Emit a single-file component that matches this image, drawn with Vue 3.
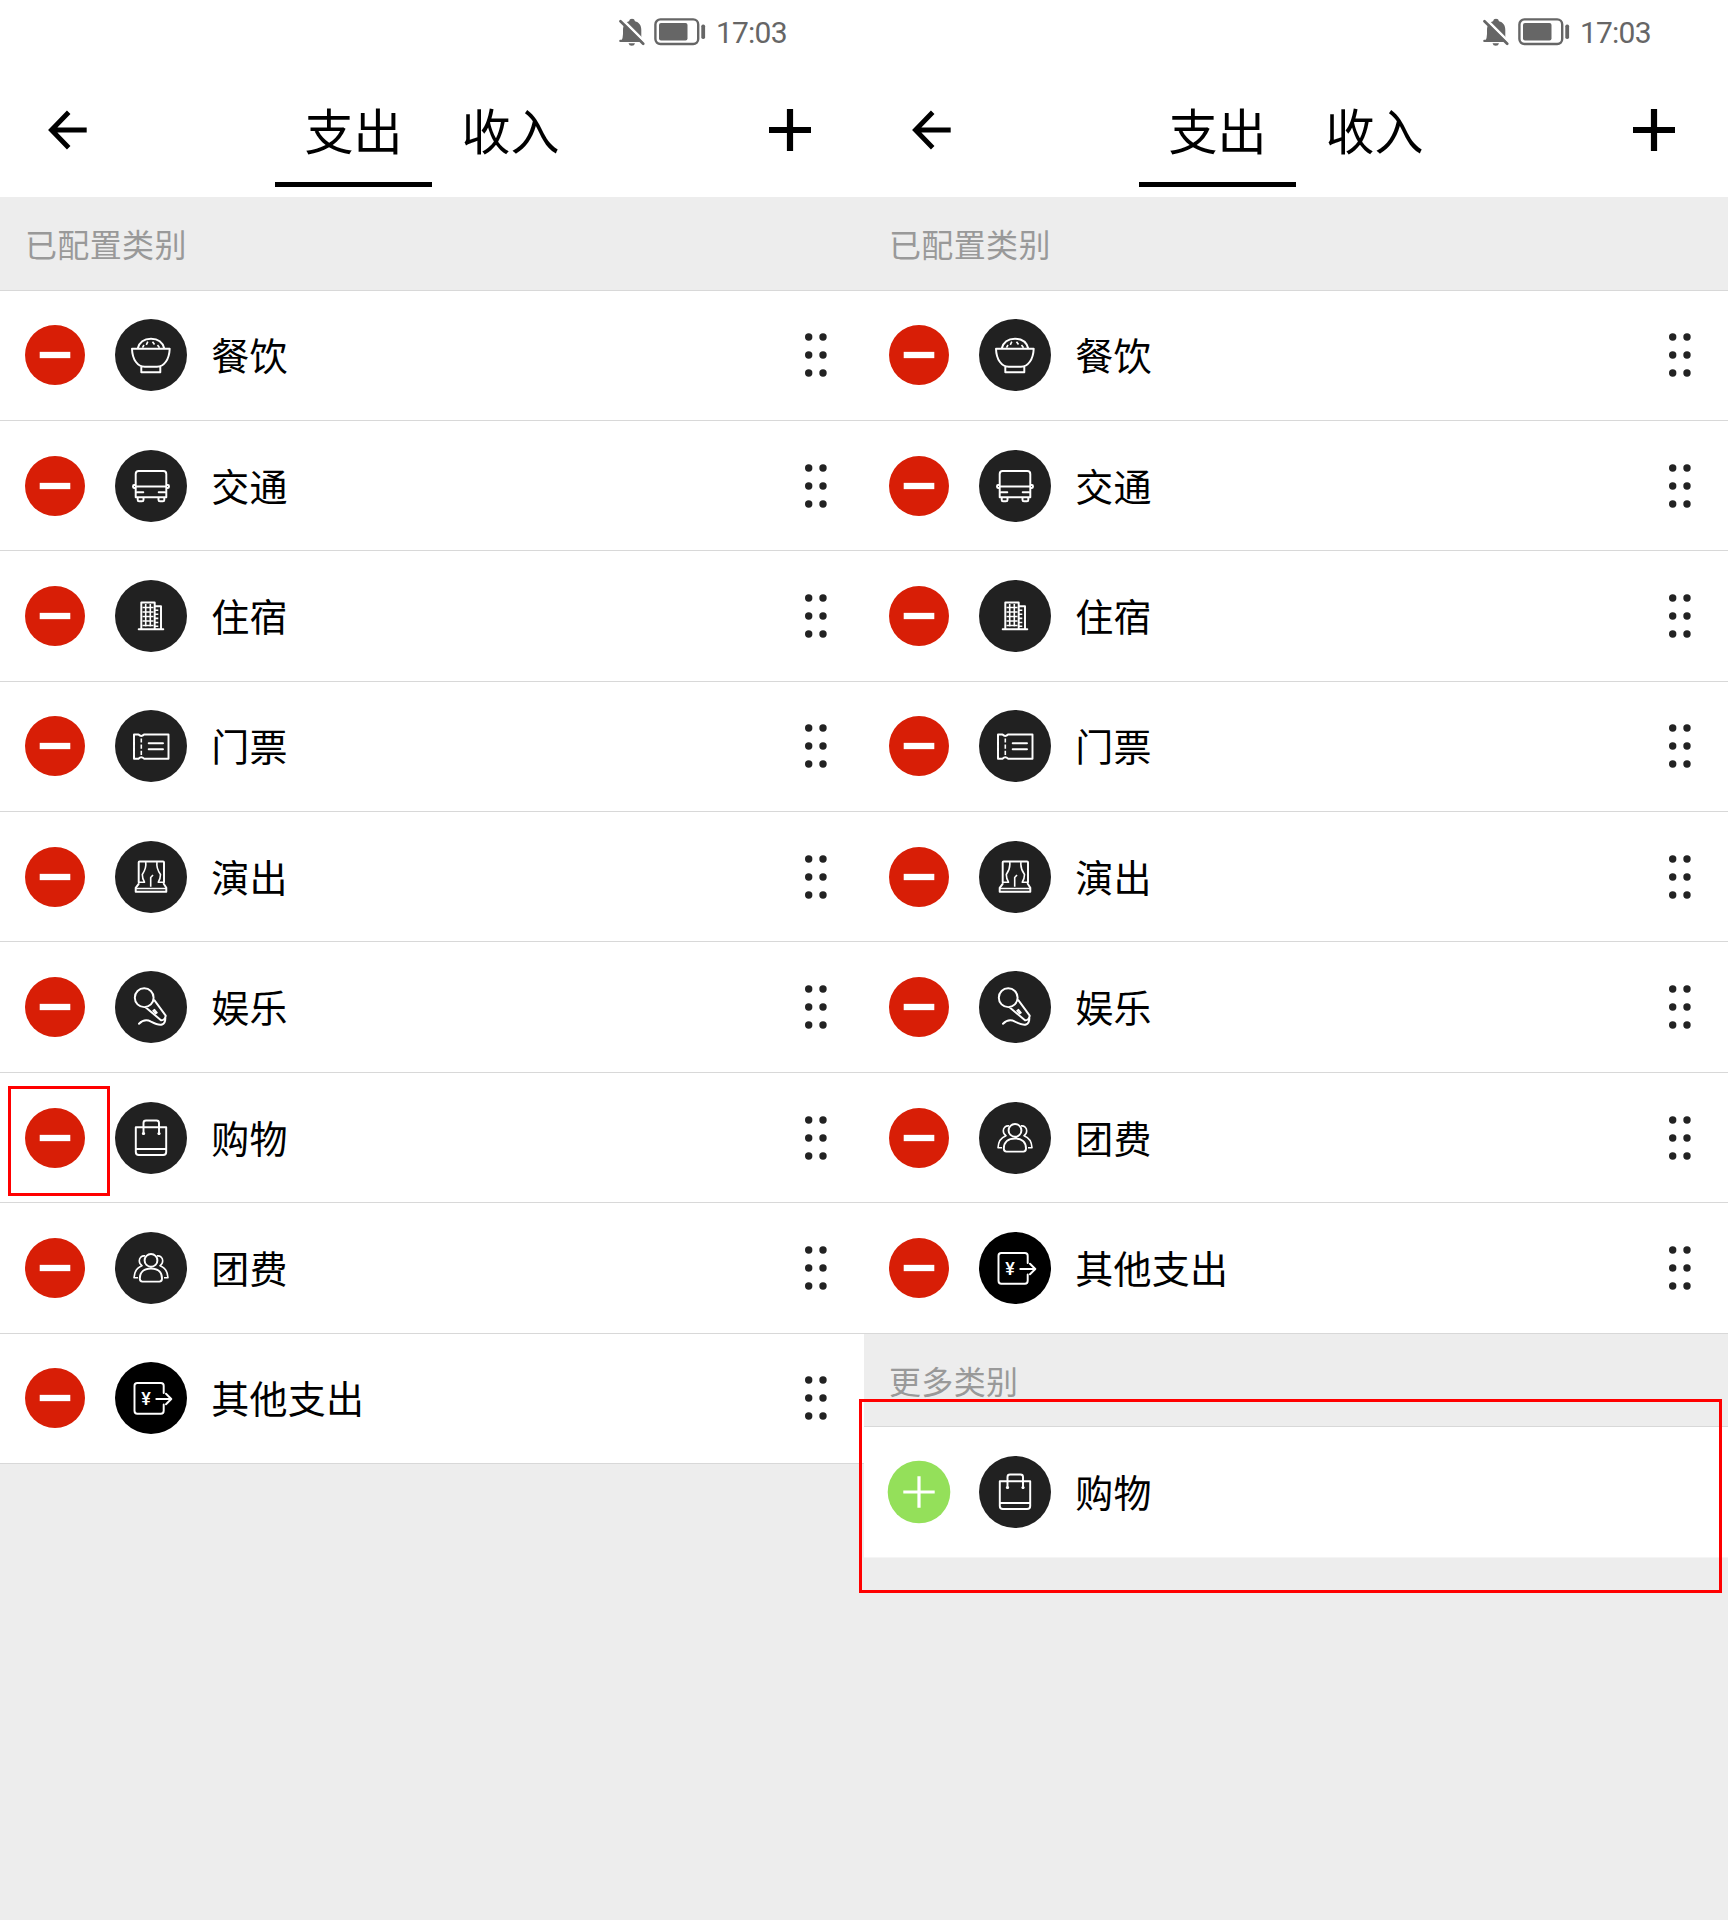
<script setup>
const categories = {
  food: {
    name: '餐饮',
    line: 'M22.7 29.5C24.5 22.5 30 19.7 36 19.7S47.5 22.5 49.3 29.5M17 29.7H54.7C54.3 40.5 49 47.7 42 47.7H29.7C22.5 47.7 17.3 40.5 17 29.7ZM26.3 48V53.2H45.3V48',
    fine: 'M32.8 22.7L31.3 25.8M37.5 22.7L39.5 25.5M29 26L27.5 28.7M42.5 26L44.5 28.7',
  },
  transit: {
    name: '交通',
    line: 'M20.7 47.3V24Q20.7 21 23.7 21H48.3Q51.3 21 51.3 24V47.3ZM20.7 36.5H51.3M20.7 35H19Q18 35 18 36.5T19 38H20.7M51.3 35H53Q54 35 54 36.5T53 38H51.3M22.3 42.3H28.3M43.7 42.3H49.7M22.7 47.3V50Q22.7 51.2 24 51.2H27Q28.5 51.2 28.5 50V47.3M43.5 47.3V50Q43.5 51.2 45 51.2H48Q49.3 51.2 49.3 50V47.3',
  },
  hotel: {
    name: '住宿',
    line: 'M26.3 49V22.5H39.7V49M39.7 26.2H46V49M23.7 49.2H48.3',
    fine: 'M30.7 24V46.5M35.3 24V46.5M27.5 27.5H38.5M27.5 32H38.5M27.5 36.5H38.5M27.5 41H38.5M27.5 45.5H38.5M40 30.2H43.3M40 34.3H43.3M40 38.4H43.3M40 42.5H43.3M40 46.2H43.3',
  },
  ticket: {
    name: '门票',
    line: 'M19 24.5H23.5Q26.3 27.3 29 24.5H53.5V48.7H29Q26.3 45.8 23.5 48.7H19ZM33.7 33.3H48M33.7 39.3H48',
    fine: 'M26.3 28.5V32.5M26.3 34.5V38.8M26.3 40.8V45',
  },
  show: {
    name: '演出',
    line: 'M23.7 41.3V21.3Q23.7 20.5 24.5 20.5H48Q49 20.5 49 21.3V41.3M23.7 42.8L20.7 46.8V50.8H51.3V46.8L48.7 42.8',
    fine: 'M30.7 21C31.5 26 30 29.500 27.3 33.5C27.3 37 28.5 39.5 29.5 41.2H23.7M42 21C41.2 26 42.7 29.500 45.500 33.5C45.5 37 44.3 39.5 43.3 41.2H49M21 47.5H51.3M35.7 45.7V36.500L38 34',
  },
  fun: {
    name: '娱乐',
    line: 'M38.6 26.7A9.4 9.4 0 1 1 19.8 26.7A9.4 9.4 0 1 1 38.6 26.7ZM30.8 36.6L46 49.2C48.5 49.5 50.5 47.5 50.7 44.6L39.5 29.3M24 52.8C28 48.8 32.5 48.8 36 50.7C40.5 53 44 54.6 47 53.5C49.7 52.5 50.5 49.5 50.3 46.5',
    fine: 'M39.5 38.7L42 41.7L40.7 42.6L38 39.8Z',
  },
  shopping: {
    name: '购物',
    line: 'M20.8 25.2H51.2V50Q51.2 53 48.2 53H23.8Q20.8 53 20.8 50ZM20.8 47H51.2M28.5 32V21Q28.5 18.5 31 18.5H41.5Q44 18.5 44 21V32',
    dots: [[28.5, 31.5], [44, 31.5]],
  },
  group: {
    name: '团费',
    line: 'M42.4 28.4A6.4 6.4 0 1 1 29.6 28.4A6.4 6.4 0 1 1 42.4 28.4ZM27.5 49.6Q24.8 49.6 24.8 46.5C24.8 39.7 29.5 36.4 36 36.4S47 39.7 47 46.5Q47 49.6 44.3 49.6Z',
    fine: 'M30 23.9C26.5 23.5 24.3 25.7 24.3 28.8C24.3 31 25.3 32.7 27 33.7C22 35.5 19.3 39.3 19 45.8H23M42 23.9C45.5 23.5 47.7 25.7 47.7 28.8C47.7 31 46.7 32.7 45 33.7C50 35.5 52.7 39.3 53 45.8H49',
  },
  other: {
    name: '其他支出',
    black: true,
    currency: true,
    line: 'M48.7 31V23.7Q48.7 20.9 45.9 20.9H22.3Q19.5 20.9 19.5 23.7V48.7Q19.5 51.7 22.3 51.7H45.9Q48.7 51.7 48.7 48.7V42.5M41.3 37H56M51 31.7L56.3 37L51 42.3',
  },
}

const pick = (...keys) => keys.map((key) => categories[key])

const screens = [
  {
    configured: pick('food', 'transit', 'hotel', 'ticket', 'show', 'fun', 'shopping', 'group', 'other'),
    more: [],
    mark: 'mark-remove',
  },
  {
    configured: pick('food', 'transit', 'hotel', 'ticket', 'show', 'fun', 'group', 'other'),
    more: pick('shopping'),
    mark: 'mark-added',
  },
]

const groupsOf = (screen) =>
  [
    { title: '已配置类别', items: screen.configured, addable: false },
    { title: '更多类别', items: screen.more, addable: true },
  ].filter((group) => group.items.length)
</script>

<template>
  <main class="board">
    <section v-for="(screen, i) in screens" :key="i" class="screen">
      <div class="status">
        <svg class="bell" viewBox="0 0 27 29">
          <path d="M3.2 23.5Q5 20 5 16V12C5 7 7.5 4.2 11 3.2Q11.5 .8 14 .8T17 3.2C21 4.2 23.3 7 23.3 12V18.5L25 23.5ZM10.5 25.2H17Q16.5 27.8 13.8 27.8T10.5 25.2Z" fill="#666" />
          <path d="M4 1.2L28.5 25.700" stroke="#fff" stroke-width="2.800" />
          <path d="M2.500 3.2L25.200 25.800" stroke="#666" stroke-width="2.700" stroke-linecap="round" />
          <path d="M2.300 22.900H21.500" stroke="#666" stroke-width="2.200" stroke-linecap="round" />
        </svg>
        <svg class="battery" viewBox="0 0 52 28">
          <rect x="1.400" y="1.400" width="42.800" height="24.600" rx="5" fill="none" stroke="#666" stroke-width="2.400" />
          <rect x="5" y="5" width="28.500" height="17.500" rx="2" fill="#666" />
          <rect x="47.300" y="6.500" width="3.800" height="14.400" rx="1.700" fill="#666" />
        </svg>
        <span class="time">17:03</span>
      </div>

      <header class="bar">
        <svg class="back" viewBox="0 0 40 40">
          <path d="M39.700 20H5M21.700 2.300L4.500 20L21.700 37.700" fill="none" stroke="#000" stroke-width="4.900" />
        </svg>
        <nav class="tabs">
          <span class="tab active">支出</span>
          <span class="tab">收入</span>
        </nav>
        <svg class="plus" viewBox="0 0 42 42">
          <path d="M21 0V42M0 21H42" stroke="#000" stroke-width="6.200" />
        </svg>
      </header>

      <template v-for="group in groupsOf(screen)" :key="group.title">
        <h2 class="heading">{{ group.title }}</h2>
        <ul class="list" :class="{ addable: group.addable }">
          <li v-for="item in group.items" :key="item.name" class="row">
            <svg class="action" viewBox="-32 -32 64 64">
              <template v-if="group.addable">
                <circle r="31.300" fill="#94e05a" />
                <path d="M-15.700 0H15.700M0 -15.700V15.700" stroke="#fff" stroke-width="3.200" />
              </template>
              <template v-else>
                <circle r="30" fill="#d81e06" />
                <path d="M-15.300 0H15.300" stroke="#fff" stroke-width="6.300" />
              </template>
            </svg>
            <svg class="icon" viewBox="0 0 72 72" fill="none" stroke="#fff" stroke-linejoin="round">
              <circle cx="36" cy="36" r="36" :fill="item.black ? '#000' : '#212121'" stroke="none" />
              <path :d="item.line" stroke-width="1.950" stroke-linecap="round" />
              <path v-if="item.fine" :d="item.fine" stroke-width="1.600" />
              <circle v-for="(dot, d) in item.dots" :key="d" :cx="dot[0]" :cy="dot[1]" r="1.600" fill="#fff" stroke="none" />
              <text v-if="item.currency" class="yen" x="31" y="43" text-anchor="middle">¥</text>
            </svg>
            <span class="name">{{ item.name }}</span>
            <svg v-if="!group.addable" class="grip" viewBox="0 0 24 46" fill="#222">
              <template v-for="y in [5, 23, 41]" :key="y">
                <circle cx="4.700" :cy="y" r="3.700" />
                <circle cx="19" :cy="y" r="3.700" />
              </template>
            </svg>
          </li>
        </ul>
      </template>

      <div class="mark" :class="screen.mark"></div>
    </section>
  </main>
</template>

<style>
body {
  margin: 0;
  background: #ededed;
}
</style>

<style scoped>
.board {
  display: flex;
  width: 1728px;
  height: 1920px;
  font-family: "Noto Sans CJK SC", sans-serif;
  color: #000;
}
.screen {
  position: relative;
  width: 864px;
  height: 1920px;
  background: #ededed;
}
.status {
  box-sizing: border-box;
  display: flex;
  align-items: center;
  justify-content: flex-end;
  height: 64px;
  padding-right: 76px;
  background: #fff;
}
.bell {
  width: 27px;
  height: 29px;
  margin-right: 9px;
}
.battery {
  width: 52px;
  height: 28px;
  margin-right: 10px;
}
.time {
  width: 72px;
  padding-top: 2px;
  font: 400 30px/36px Roboto, sans-serif;
  letter-spacing: -0.8px;
  color: #666;
  white-space: nowrap;
}
.bar {
  box-sizing: border-box;
  display: flex;
  justify-content: space-between;
  height: 133px;
  padding: 0 53px 0 47px;
  background: #fff;
}
.back {
  width: 40px;
  height: 40px;
  margin-top: 45.500px;
}
.plus {
  width: 42px;
  height: 42px;
  margin-top: 44.500px;
}
.tabs {
  display: flex;
  margin-right: -8px;
}
.tab {
  box-sizing: border-box;
  width: 157px;
  height: 123px;
  padding-top: 29px;
  border-bottom: 5px solid transparent;
  font-size: 49px;
  line-height: 72px;
  text-align: center;
}
.tab.active {
  border-color: #000;
}
.heading {
  box-sizing: border-box;
  height: 93.500px;
  margin: 0;
  padding-left: 25px;
  border-bottom: 1px solid #d8d8d8;
  font-size: 32px;
  font-weight: 400;
  letter-spacing: 0.35px;
  line-height: 92px;
  color: #999;
}
.list {
  margin: 0;
  padding: 0;
  list-style: none;
}
.row {
  box-sizing: border-box;
  display: flex;
  align-items: center;
  height: 130.400px;
  padding: 0 36px 0 23.300px;
  border-bottom: 1px solid #d8d8d8;
  background: #fff;
}
.addable .row {
  border-bottom-color: #f5f5f5;
}
.action {
  width: 64px;
  height: 64px;
}
.icon {
  width: 72px;
  height: 72px;
  margin-left: 27.700px;
}
.name {
  margin-left: 24.300px;
  padding-bottom: 2px;
  font-size: 38px;
  letter-spacing: 0.2px;
  line-height: 56px;
}
.yen {
  font: 500 18px Roboto, sans-serif;
  fill: #fff;
  stroke: none;
}
.grip {
  width: 24px;
  height: 46px;
  margin-left: auto;
}
.mark {
  position: absolute;
  box-sizing: border-box;
  border: 3px solid #f00;
}
.mark-remove {
  left: 8px;
  top: 1086px;
  width: 102px;
  height: 110px;
}
.mark-added {
  left: -5px;
  top: 1399px;
  width: 863px;
  height: 194px;
}
</style>
